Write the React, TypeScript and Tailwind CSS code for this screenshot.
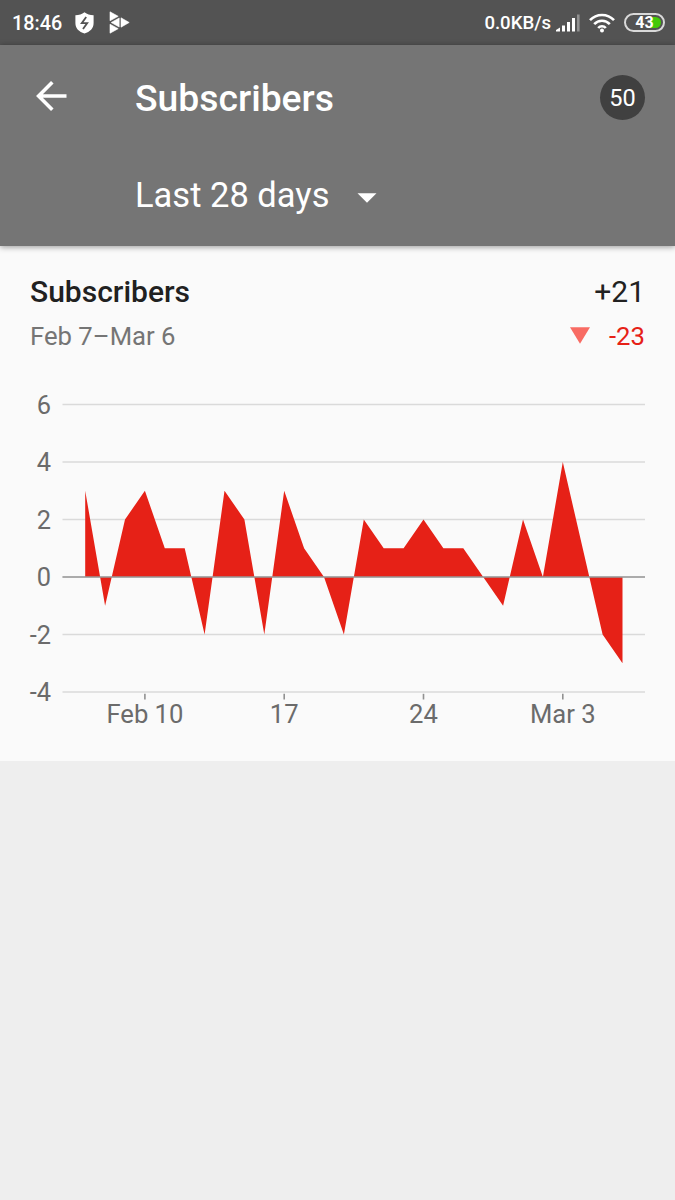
const DAILY = [
  3, -1, 2, 3, 1, 1, -2, 3, 2, -2, 3, 1, 0, -2, 2, 1, 1, 2, 1, 1, 0, -1, 2, 0, 4, 1, -2, -3,
];

const Y_TICKS = [6, 4, 2, 0, -2, -4];

const X_TICKS = [
  { day: 3, label: "Feb 10" },
  { day: 10, label: "17" },
  { day: 17, label: "24" },
  { day: 24, label: "Mar 3" },
];

const xAt = (day: number) => 85.2 + day * 19.9;
const yAt = (value: number) => 197 - value * 28.75;

function StatusBar() {
  return (
    <div className="flex h-[45px] items-center justify-between bg-[#535353] pr-[10px] pl-3 text-white">
      <div className="flex items-center">
        <span className="w-[63px] pt-px text-[19.8px] leading-[45px] font-medium">18:46</span>
        <svg className="h-[22px] w-[19px]" viewBox="0 0 19 22">
          <path d="M9.5 0.3 C7 2.3 4 3 0.4 3.2 V11 C0.4 16.5 4 19.7 9.5 21.6 C15 19.7 18.6 16.5 18.6 11 V3.2 C15 3 12 2.3 9.5 0.3Z" fill="#fff" />
          <path d="M11.2 5 L6.8 11.1 H12.2 L8 17" fill="none" stroke="#535353" strokeWidth="1.8" />
        </svg>
        <svg className="ml-[15px] h-[23px] w-[22px]" viewBox="0 0 22 23">
          <g fill="#fff" stroke="#fff" strokeWidth="0.6" strokeLinejoin="round">
            <path d="M1 0.8 L9.2 5.3 L1 9.8Z" />
            <path d="M1 13.2 L9.2 17.7 L1 22.2Z" />
            <path d="M2.2 11.5 L10.2 7 V16Z" />
            <path d="M12 6.8 L20.2 11.5 L12 16.2Z" />
          </g>
        </svg>
      </div>
      <div className="flex items-center">
        <span className="pt-px text-[18.6px] leading-[45px] font-medium">0.0KB/s</span>
        <svg className="ml-[5px] h-[18px] w-[25px]" viewBox="0 0 25 18">
          <path d="M0 17.5 V16 L4 13.5 V17.5Z M6 11.5 H9 V17.5 H6Z M11 8 H14 V17.5 H11Z M16 4 H19 V17.5 H16Z" fill="#fff" />
          <path d="M21 0.5 H23.6 V17.5 H21Z" fill="#919191" />
        </svg>
        <svg className="ml-[8px] h-[20px] w-[26px]" viewBox="0 0 26 20">
          <g fill="none" stroke="#fff" strokeWidth="2.6">
            <path d="M1 7.2 C7.5 0.2 18.5 0.2 25 7.2" />
            <path d="M5.2 11.2 C9.5 6.6 16.5 6.6 20.8 11.2" />
            <path d="M9.2 15 C11.3 12.6 14.7 12.6 16.8 15" />
          </g>
          <circle cx="13" cy="17.4" r="2" fill="#fff" />
        </svg>
        <div className="relative ml-[9px] flex h-[19px] w-[41px] items-center justify-center rounded-full border-2 border-[#d9d9d9]">
          <span className="absolute top-[2px] right-[2px] h-[11px] w-[11px] rounded-r-full bg-[#44c808]" />
          <span className="relative pt-px text-[16px] leading-none font-bold">43</span>
        </div>
      </div>
    </div>
  );
}

function Header() {
  return (
    <header className="relative h-[200.5px] bg-[#757575] text-white shadow-[0_1px_6px_rgba(0,0,0,0.4)]">
      <div className="flex h-[104px] items-center pr-[30px] pl-9">
        <svg className="mb-[2px] h-[30px] w-[31px]" viewBox="0 0 31 30">
          <path d="M30.5 15 H3 M16.3 1.3 L2.6 15 L16.3 28.7" fill="none" stroke="#fff" strokeWidth="3.6" />
        </svg>
        <h1 className="ml-[68px] pt-[3px] text-[37.3px] leading-none font-medium">Subscribers</h1>
        <span className="ml-auto flex h-[45px] w-[45px] items-center justify-center rounded-full bg-[#404040] pt-[3px] text-[23.5px]">
          50
        </span>
      </div>
      <div className="flex h-[92px] items-center pl-[135px]">
        <span className="text-[34.5px] leading-none">Last 28 days</span>
        <svg className="mt-[6px] ml-[28px] h-[10px] w-[20px]" viewBox="0 0 20 10">
          <path d="M0.5 0.3 H19.5 L10 9.7Z" fill="#fff" />
        </svg>
      </div>
    </header>
  );
}

function Chart() {
  const line = DAILY.map((value, day) => `${xAt(day)},${yAt(value)}`).join(" ");
  const area = `${xAt(0)},${yAt(0)} ${line} ${xAt(DAILY.length - 1)},${yAt(0)}`;

  return (
    <svg className="block h-[380px] w-[675px]" viewBox="0 0 675 380">
      {Y_TICKS.map((tick) => (
        <g key={tick}>
          <line x1="62.5" x2="645" y1={yAt(tick)} y2={yAt(tick)} stroke="#dadada" strokeWidth="1.6" />
          <text x="51" y={yAt(tick) + 9} textAnchor="end" fontSize="25.4" fill="#6b6b6b">
            {tick}
          </text>
        </g>
      ))}
      <polygon points={area} fill="#e62117" />
      <line x1="62.5" x2="645" y1={yAt(0)} y2={yAt(0)} stroke="#999999" strokeWidth="1.6" />
      {X_TICKS.map(({ day, label }) => (
        <g key={label}>
          <line x1={xAt(day)} x2={xAt(day)} y1="313.8" y2="319.5" stroke="#919191" strokeWidth="1.6" />
          <text x={xAt(day)} y="342.5" textAnchor="middle" fontSize="25.6" fill="#6b6b6b">
            {label}
          </text>
        </g>
      ))}
    </svg>
  );
}

export default function App() {
  return (
    <div className="h-[1200px] w-[675px] overflow-hidden bg-[#eeeeee] font-['Roboto',sans-serif]">
      <StatusBar />
      <Header />
      <section className="h-[515px] bg-[#fafafa]">
        <div className="flex h-[134px] justify-between pt-[25.5px] pr-[30px] pl-[30px]">
          <div>
            <h2 className="text-[30px] leading-[42px] font-medium text-[#212121]">Subscribers</h2>
            <p className="text-[25.7px] leading-[47px] text-[#757575]">Feb 7–Mar 6</p>
          </div>
          <div className="text-right">
            <p className="text-[30px] leading-[42px] text-[#212121]">+21</p>
            <p className="flex items-center justify-end text-[25.7px] leading-[47px] text-[#e62117]">
              <svg className="mr-[19px] mb-[2px] h-[17px] w-[20px]" viewBox="0 0 20 17">
                <path d="M0 0.3 H20 L10 16.7Z" fill="#f86b63" />
              </svg>
              -23
            </p>
          </div>
        </div>
        <Chart />
      </section>
    </div>
  );
}
